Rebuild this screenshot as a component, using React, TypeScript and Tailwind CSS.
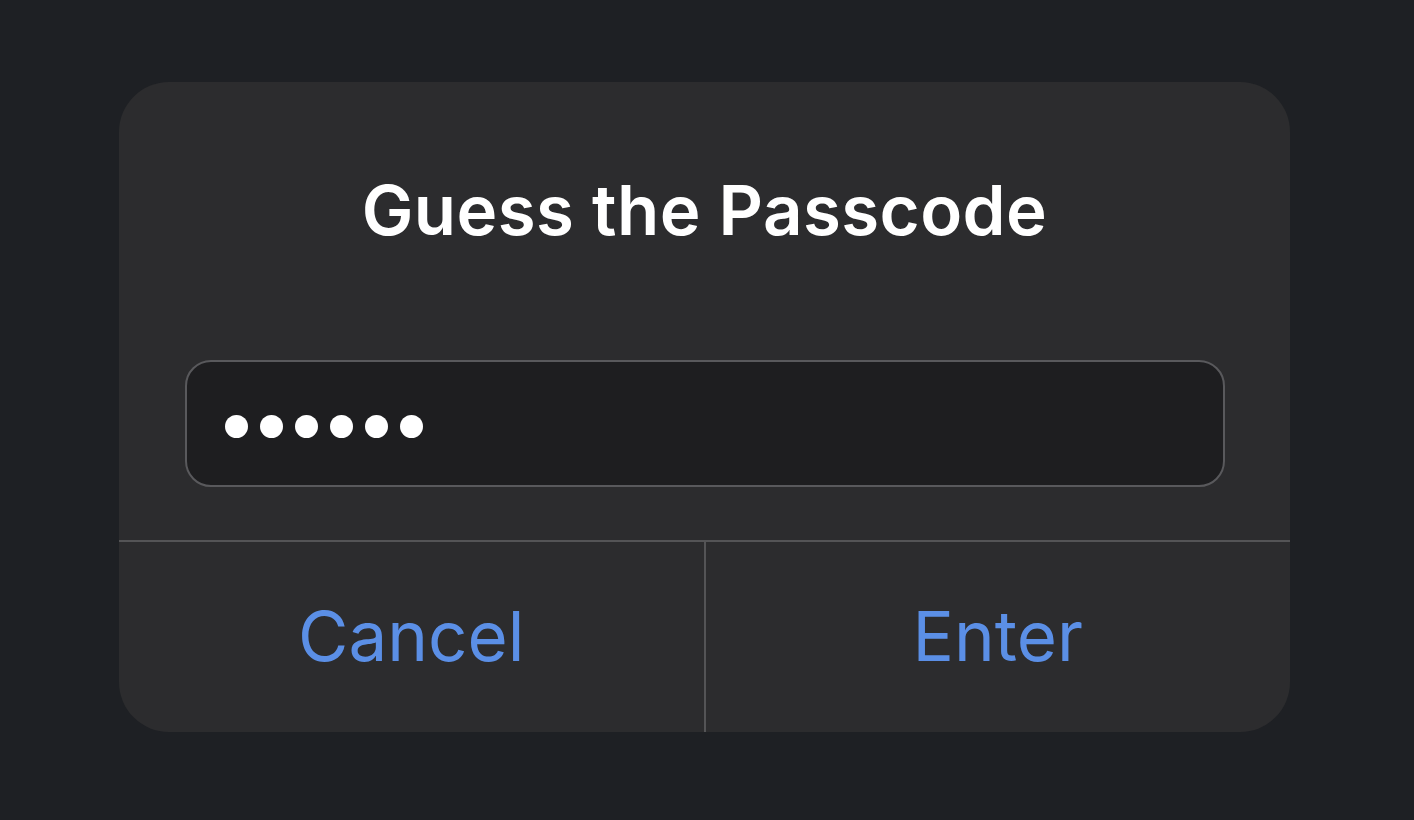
export default function App() {
  const dots = [0, 1, 2, 3, 4, 5]

  return (
    <div className="w-[1414px] h-[820px] bg-[#1e2024] pt-[82px] pl-[119px] font-['Inter',sans-serif]">
      <div className="w-[1171px] h-[650px] rounded-[50px] bg-[#2c2c2e] flex flex-col overflow-hidden">
        <div className="h-[458px] flex flex-col items-center">
          <h1 className="mt-[88px] h-[80px] leading-[80px] text-[69px] font-semibold text-white tracking-[0.4px]">
            Guess the Passcode
          </h1>
          <div className="mt-[110px] w-[1040px] h-[127px] rounded-[26px] border-2 border-[#59595c] bg-[#1e1e20] flex items-center gap-[12px] pl-[38px] pt-[5px]">
            {dots.map((d) => (
              <span key={d} className="w-[23px] h-[23px] rounded-full bg-white" />
            ))}
          </div>
        </div>
        <div className="h-[2px] bg-[#545456]" />
        <div className="flex-1 flex">
          <button className="flex-1 flex items-center justify-center text-[69px] text-[#5b8fe6] font-normal">
            Cancel
          </button>
          <div className="w-[2px] bg-[#545456]" />
          <button className="flex-1 flex items-center justify-center text-[69px] text-[#5b8fe6] font-normal">
            Enter
          </button>
        </div>
      </div>
    </div>
  )
}
